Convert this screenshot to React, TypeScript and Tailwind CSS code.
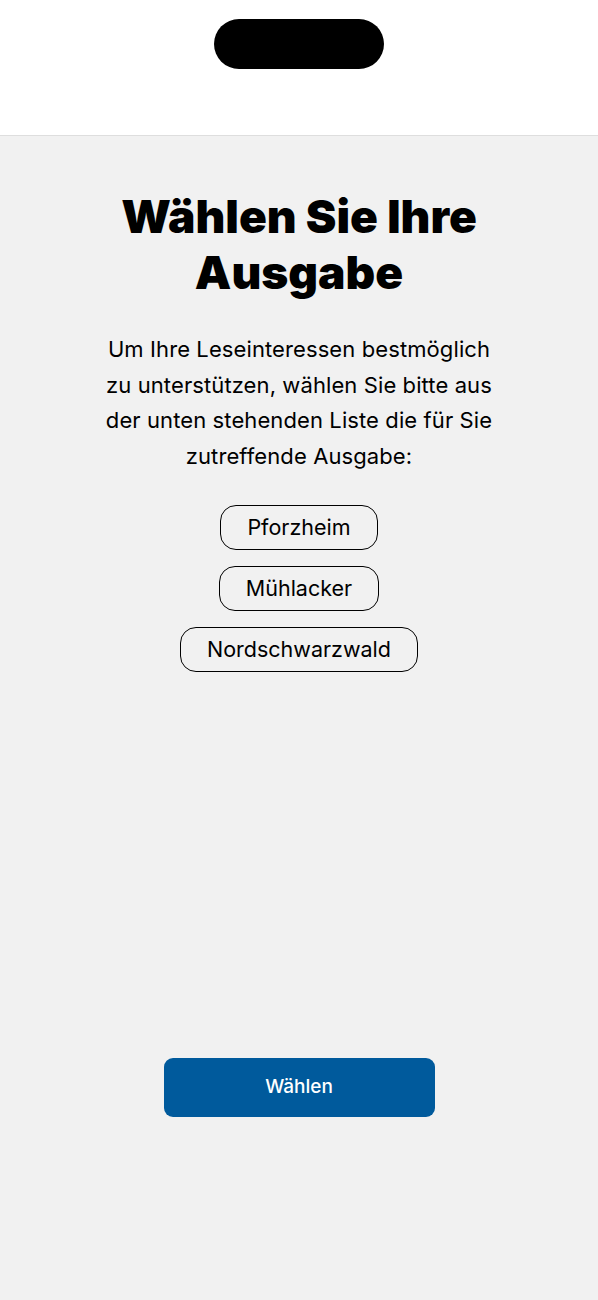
const editions = ["Pforzheim", "Mühlacker", "Nordschwarzwald"];

export default function App() {
  return (
    <div className="flex flex-col min-h-[1300px] bg-[#f1f1f1] font-['Inter',sans-serif] text-black">
      <div className="h-[136px] shrink-0 bg-white border-b border-[#dedede] flex justify-center">
        <div className="mt-[19px] w-[170px] h-[50px] rounded-full bg-black" />
      </div>

      <div className="flex flex-col items-center px-6">
        <h1 className="mt-[52px] w-[420px] text-center text-[46px] leading-[56px] font-black">
          Wählen Sie Ihre Ausgabe
        </h1>
        <p className="mt-[32px] text-center text-[22px] leading-[35.5px] tracking-[0.1px] whitespace-nowrap">
          Um Ihre Leseinteressen bestmöglich
          <br />
          zu unterstützen, wählen Sie bitte aus
          <br />
          der unten stehenden Liste die für Sie
          <br />
          zutreffende Ausgabe:
        </p>

        <div className="mt-[31px] flex flex-col items-center gap-[16px]">
          {editions.map((e) => (
            <button
              key={e}
              className="h-[45px] px-[26px] rounded-[16px] border-[1.5px] border-black text-[21.5px] leading-none bg-transparent"
            >
              {e}
            </button>
          ))}
        </div>

        <button className="mt-[386px] w-[271px] h-[59px] rounded-[9px] bg-[#005a9c] text-white text-[19px] font-medium">
          Wählen
        </button>
      </div>
    </div>
  );
}
